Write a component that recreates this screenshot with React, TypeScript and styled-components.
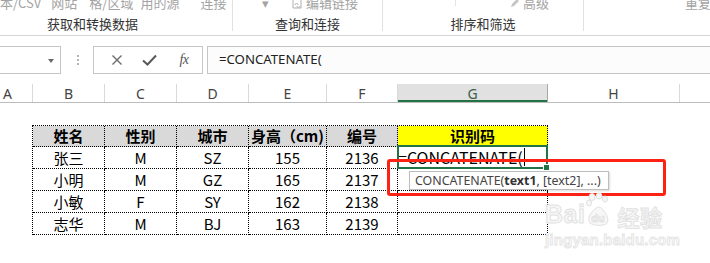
import React from "react";
import styled, { createGlobalStyle } from "styled-components";

const CJK = `"Noto Sans CJK SC", "Noto Sans", sans-serif`;
const UI = `"Noto Sans", "Noto Sans CJK SC", sans-serif`;

const GlobalStyle = createGlobalStyle`
  html, body { margin: 0; padding: 0; background: #ffffff; overflow: hidden; }
  #root { width: 710px; height: 263px; overflow: hidden; }
`;

const Page = styled.div`
  width: 710px;
  height: 263px;
  background: #fff;
  display: flex;
  flex-direction: column;
  font-family: ${CJK};
`;

/* ---------- Ribbon ---------- */
const Ribbon = styled.div`
  height: 35px;
  border-bottom: 1px solid #d5d5d5;
  display: flex;
  flex-shrink: 0;
`;

const Group = styled.div<{ $w?: number }>`
  width: ${(p) => (p.$w ? `${p.$w}px` : "auto")};
  flex: ${(p) => (p.$w ? "none" : "1")};
  display: flex;
  flex-direction: column;
`;

const TopRow = styled.div`
  height: 12px;
  overflow: hidden;
  display: flex;
  align-items: flex-end;
  position: relative;
`;

const TopItem = styled.span<{ $ml: number }>`
  margin-left: ${(p) => p.$ml}px;
  font-size: 13px;
  line-height: 18px;
  color: #a3a3a3;
  white-space: nowrap;
  display: flex;
  align-items: center;
  gap: 3px;
`;

const TinySep = styled.span<{ $ml: number }>`
  margin-left: ${(p) => p.$ml}px;
  width: 1px;
  height: 6px;
  align-self: flex-start;
  background: #e3e3e3;
`;

const GroupLabel = styled.div<{ $pr?: number }>`
  flex: 1;
  display: flex;
  align-items: center;
  justify-content: center;
  padding-right: ${(p) => p.$pr ?? 0}px;
  font-size: 13px;
  color: #333;
  padding-bottom: 1px;
`;

const VSep = styled.div`
  width: 1px;
  height: 31px;
  background: #e1e1e1;
  flex-shrink: 0;
`;

/* ---------- Formula bar ---------- */
const FormulaBar = styled.div`
  margin-top: 10px;
  height: 28px;
  display: flex;
  align-items: stretch;
  flex-shrink: 0;
`;

const NameBox = styled.div`
  width: 62px;
  margin-left: -1px;
  box-sizing: border-box;
  border: 1px solid #c6c6c6;
  background: #fff;
  display: flex;
  align-items: center;
  justify-content: flex-end;
  padding-right: 6px;
`;

const DropArrow = styled.span`
  width: 0;
  height: 0;
  border-left: 3px solid transparent;
  border-right: 3px solid transparent;
  border-top: 4px solid #6a6a6a;
  margin-top: 1px;
`;

const Grip = styled.div`
  width: 31px;
  display: flex;
  flex-direction: column;
  align-items: center;
  justify-content: center;
  gap: 2px;
  padding-left: 1px;
`;

const GripDot = styled.span`
  width: 2px;
  height: 2px;
  background: #b4b4b4;
`;

const ButtonBox = styled.div`
  width: 110px;
  box-sizing: border-box;
  border: 1px solid #c6c6c6;
  background: #fff;
  display: flex;
  align-items: center;
  padding-left: 10px;
`;

const FxButton = styled.span<{ $w: number }>`
  width: ${(p) => p.$w}px;
  display: flex;
  align-items: center;
  justify-content: center;
`;

const FxText = styled.span`
  font-family: "Liberation Serif", "DejaVu Serif", serif;
  font-style: italic;
  font-size: 14px;
  color: #555;
  letter-spacing: -0.5px;
`;

const FormulaInput = styled.div`
  flex: 1;
  margin-left: 4px;
  margin-right: -2px;
  box-sizing: border-box;
  border: 1px solid #c6c6c6;
  background: #fcfcfc;
  display: flex;
  align-items: center;
  padding-left: 11px;
  font-family: ${UI};
  font-size: 13.2px;
  color: #222;
  padding-bottom: 2px;
`;

/* ---------- Column headers ---------- */
const COLS = [33, 72, 72, 72, 78, 71, 150, 132, 60];

const ColHeaderRow = styled.div`
  margin-top: 10px;
  height: 18px;
  border-bottom: 1px solid #bcbcbc;
  display: flex;
  flex-shrink: 0;
`;

const ColHeader = styled.div<{ $w: number; $active?: boolean; $left?: boolean }>`
  width: ${(p) => p.$w}px;
  flex-shrink: 0;
  box-sizing: border-box;
  border-right: 1px solid ${(p) => (p.$active ? "#a8a8a8" : "#d9d9d9")};
  background: ${(p) => (p.$active ? "#e1e1e1" : "#fff")};
  box-shadow: ${(p) => (p.$active ? "inset 0 -2px 0 #217346" : "none")};
  display: flex;
  align-items: center;
  justify-content: ${(p) => (p.$left ? "flex-start" : "center")};
  padding-left: ${(p) => (p.$left ? 3 : 0)}px;
  font-family: ${UI};
  font-size: 14px;
  color: ${(p) => (p.$active ? "#3b5e47" : "#444")};
`;

/* ---------- Sheet ---------- */
const Sheet = styled.div`
  position: relative;
  flex: 1;
  padding-top: 22px;
  padding-left: 32px;
`;

const Table = styled.div`
  display: grid;
  grid-template-columns: ${COLS.slice(1, 7).map((c) => `${c}px`).join(" ")};
  grid-template-rows: 21px 22px 22px 22px 22px;
  width: max-content;
  border-top: 1px dotted #000;
  border-left: 1px dotted #000;
`;

const Cell = styled.div<{ $head?: boolean; $bg?: string; $left?: boolean }>`
  box-sizing: border-box;
  border-right: 1px dotted #000;
  border-bottom: 1px dotted #000;
  background: ${(p) => p.$bg ?? "transparent"};
  display: flex;
  align-items: center;
  justify-content: ${(p) => (p.$left ? "flex-start" : "center")};
  font-family: ${CJK};
  font-size: ${(p) => (p.$left ? "16px" : "15px")};
  font-weight: ${(p) => (p.$head ? 700 : 400)};
  color: #000;
  white-space: nowrap;
  overflow: visible;
  padding-bottom: 1px;
`;

const Caret = styled.span`
  display: inline-block;
  width: 1px;
  height: 18px;
  background: #000;
  margin-left: 1px;
`;

const ActiveCell = styled.div`
  position: absolute;
  left: 397px;
  top: 42px;
  width: 151px;
  height: 24px;
  box-sizing: border-box;
  border: 2px solid #217346;
  pointer-events: none;
`;

const FillHandle = styled.span`
  position: absolute;
  right: -4px;
  bottom: -4px;
  width: 5px;
  height: 5px;
  background: #217346;
  border: 1px solid #fff;
`;

const Tooltip = styled.div`
  position: absolute;
  left: 409px;
  top: 68px;
  width: 200px;
  height: 19px;
  box-sizing: border-box;
  border: 1px solid #bdbdbd;
  background: #fff;
  box-shadow: 1px 1px 2px rgba(0, 0, 0, 0.15);
  display: flex;
  align-items: center;
  padding-left: 5px;
  font-family: ${UI};
  font-size: 12.4px;
  color: #444;
  white-space: nowrap;
  padding-bottom: 1px;
`;

const Bold = styled.b`
  font-weight: 700;
  color: #333;
`;

const RedBox = styled.div`
  position: absolute;
  left: 387px;
  top: 56px;
  width: 279px;
  height: 37px;
  box-sizing: border-box;
  border: 3px solid #fc2314;
  border-radius: 3px;
  pointer-events: none;
`;

const Watermark = styled.div`
  position: absolute;
  left: 545px;
  top: 88px;
  width: 125px;
  display: flex;
  flex-direction: column;
  align-items: flex-start;
  pointer-events: none;
`;

const WmLogo = styled.div`
  display: flex;
  align-items: flex-end;
  height: 36px;
`;

const WmText = styled.span<{ $size: number }>`
  font-family: "Liberation Sans", Arial, sans-serif;
  font-weight: 700;
  font-size: ${(p) => p.$size}px;
  line-height: 1;
  color: #f7f7f7;
  -webkit-text-stroke: 1px #e2e2e2;
  letter-spacing: 0.5px;
`;

const WmCjk = styled(WmText)`
  font-family: ${CJK};
  margin-left: 6px;
`;

const WmUrl = styled.span`
  margin-top: 4px;
  font-family: "Liberation Sans", Arial, sans-serif;
  font-size: 15px;
  font-weight: 700;
  color: #f8f8f8;
  -webkit-text-stroke: 0.8px #e4e4e4;
  letter-spacing: 0.2px;
`;

const Paw = () => (
  <svg width="24" height="34" viewBox="0 0 24 34" style={{ marginLeft: 1, marginRight: 1 }}>
    <g fill="#f7f7f7" stroke="#e0e0e0" strokeWidth="1">
      <ellipse cx="6" cy="4" rx="3" ry="3.5" />
      <ellipse cx="13" cy="3" rx="3" ry="3" />
      <ellipse cx="19" cy="6" rx="2.6" ry="3" />
      <ellipse cx="3" cy="10" rx="2.5" ry="3" />
      <path d="M4 30 C1 26 4 20 9 16 C12 13 15 14 17 17 C21 22 24 27 20 31 C16 33 8 33 4 30 Z" />
    </g>
    <text x="12" y="29" textAnchor="middle" fontFamily="Liberation Sans, Arial, sans-serif" fontWeight="700" fontSize="11" fill="#f2f2f2" stroke="#dcdcdc" strokeWidth="0.6">du</text>
  </svg>
);

const XIcon = () => (
  <svg width="12" height="12" viewBox="0 0 12 12">
    <path d="M1.5 1.5 L10.5 10.5 M10.5 1.5 L1.5 10.5" stroke="#6b6b6b" strokeWidth="1.4" fill="none" />
  </svg>
);

const CheckIcon = () => (
  <svg width="15" height="12" viewBox="0 0 15 12">
    <path d="M1 6.5 L5.5 10.5 L14 1.5" stroke="#5a5a5a" strokeWidth="2" fill="none" />
  </svg>
);

const LinkIcon = () => (
  <svg width="11" height="12" viewBox="0 0 11 12">
    <path d="M1 1 H7 L9 3 V11 H1 Z" stroke="#b0b0b0" fill="none" strokeWidth="1" />
    <path d="M3 8 a1.5 1.5 0 0 1 3 0 M5 9 a1.5 1.5 0 0 0 3 0" stroke="#b0b0b0" fill="none" />
  </svg>
);

const PencilIcon = () => (
  <svg width="10" height="10" viewBox="0 0 10 10">
    <path d="M1 9 L2 6 L7 1 L9 3 L4 8 Z" fill="#c4c4c4" />
  </svg>
);

type Row = { cells: string[]; head?: boolean };

const rows: Row[] = [
  { head: true, cells: ["姓名", "性别", "城市", "身高（cm)", "编号", "识别码"] },
  { cells: ["张三", "M", "SZ", "155", "2136", ""] },
  { cells: ["小明", "M", "GZ", "165", "2137", ""] },
  { cells: ["小敏", "F", "SY", "162", "2138", ""] },
  { cells: ["志华", "M", "BJ", "163", "2139", ""] },
];

const letters = ["A", "B", "C", "D", "E", "F", "G", "H", ""];

export default function App() {
  return (
    <Page>
      <GlobalStyle />
      <Ribbon>
        <Group $w={232}>
          <TopRow>
            <TopItem $ml={0}>本/CSV</TopItem>
            <TopItem $ml={10}>网站</TopItem>
            <TopItem $ml={12}>格/区域</TopItem>
            <TopItem $ml={7}>用的源</TopItem>
            <TopItem $ml={21}>连接</TopItem>
          </TopRow>
          <GroupLabel $pr={47}>获取和转换数据</GroupLabel>
        </Group>
        <VSep />
        <Group $w={149}>
          <TopRow>
            <TopItem $ml={29}>▾</TopItem>
            <TopItem $ml={23}>
              <LinkIcon />
              编辑链接
            </TopItem>
          </TopRow>
          <GroupLabel>查询和连接</GroupLabel>
        </Group>
        <VSep />
        <Group $w={200}>
          <TopRow>
            <TinySep $ml={72} />
            <TopItem $ml={54}>
              <PencilIcon />
              高级
            </TopItem>
          </TopRow>
          <GroupLabel>排序和筛选</GroupLabel>
        </Group>
        <VSep />
        <Group>
          <TopRow>
            <TopItem $ml={101}>重复</TopItem>
          </TopRow>
          <GroupLabel />
        </Group>
      </Ribbon>

      <FormulaBar>
        <NameBox>
          <DropArrow />
        </NameBox>
        <Grip>
          <GripDot />
          <GripDot />
          <GripDot />
        </Grip>
        <ButtonBox>
          <FxButton $w={25}>
            <XIcon />
          </FxButton>
          <FxButton $w={40}>
            <CheckIcon />
          </FxButton>
          <FxButton $w={30}>
            <FxText>fx</FxText>
          </FxButton>
        </ButtonBox>
        <FormulaInput>=CONCATENATE(</FormulaInput>
      </FormulaBar>

      <ColHeaderRow>
        {letters.map((l, i) => (
          <ColHeader key={i} $w={COLS[i]} $active={l === "G"} $left={l === "A"}>
            {l}
          </ColHeader>
        ))}
      </ColHeaderRow>

      <Sheet>
        <Table>
          {rows.map((r, ri) =>
            r.cells.map((c, ci) => {
              const isG = ci === 5;
              const isActive = ri === 1 && isG;
              return (
                <Cell
                  key={`${ri}-${ci}`}
                  $head={r.head}
                  $bg={r.head ? (isG ? "#ffff00" : "#d9d9d9") : undefined}
                  $left={isActive}
                >
                  {isActive ? (
                    <>
                      =CONCATENATE(
                      <Caret />
                    </>
                  ) : (
                    c
                  )}
                </Cell>
              );
            })
          )}
        </Table>

        <ActiveCell>
          <FillHandle />
        </ActiveCell>

        <Tooltip>
          CONCATENATE(<Bold>text1</Bold>, [text2], ...)
        </Tooltip>

        <RedBox />

        <Watermark>
          <WmLogo>
            <WmText $size={25}>Bai</WmText>
            <Paw />
            <WmCjk $size={22}>经验</WmCjk>
          </WmLogo>
          <WmUrl>jingyan.baidu.com</WmUrl>
        </Watermark>
      </Sheet>
    </Page>
  );
}
